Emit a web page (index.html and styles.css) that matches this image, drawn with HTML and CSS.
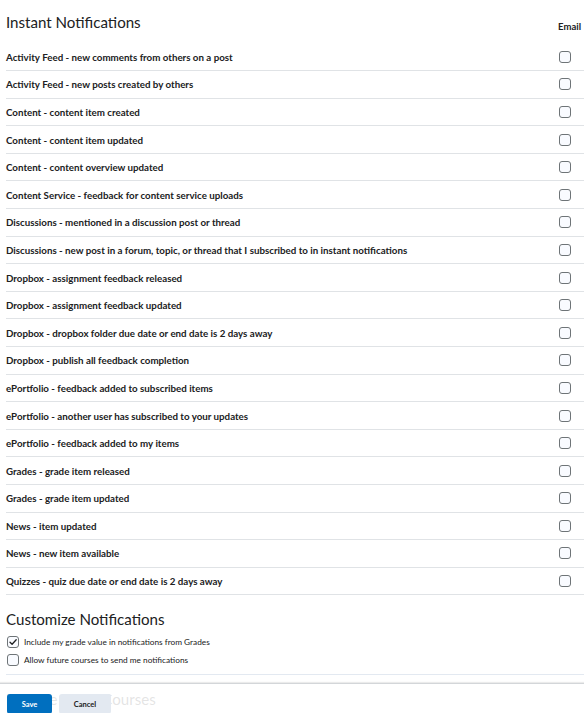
FILE: index.html
```html
<!DOCTYPE html>
<html>
<head>
<meta charset="utf-8">
<link rel="stylesheet" href="styles.css">
</head>
<body>
<main class="page">
  <section class="instant">
    <div class="head">
      <h2 class="title">Instant Notifications</h2>
      <span class="col-email">Email</span>
    </div>
    <div class="rows">
      <div class="row"><span>Activity Feed - new comments from others on a post</span><i class="cb"></i></div>
      <div class="row"><span>Activity Feed - new posts created by others</span><i class="cb"></i></div>
      <div class="row"><span>Content - content item created</span><i class="cb"></i></div>
      <div class="row"><span>Content - content item updated</span><i class="cb"></i></div>
      <div class="row"><span>Content - content overview updated</span><i class="cb"></i></div>
      <div class="row"><span>Content Service - feedback for content service uploads</span><i class="cb"></i></div>
      <div class="row"><span>Discussions - mentioned in a discussion post or thread</span><i class="cb"></i></div>
      <div class="row"><span>Discussions - new post in a forum, topic, or thread that I subscribed to in instant notifications</span><i class="cb"></i></div>
      <div class="row"><span>Dropbox - assignment feedback released</span><i class="cb"></i></div>
      <div class="row"><span>Dropbox - assignment feedback updated</span><i class="cb"></i></div>
      <div class="row"><span>Dropbox - dropbox folder due date or end date is 2 days away</span><i class="cb"></i></div>
      <div class="row"><span>Dropbox - publish all feedback completion</span><i class="cb"></i></div>
      <div class="row"><span>ePortfolio - feedback added to subscribed items</span><i class="cb"></i></div>
      <div class="row"><span>ePortfolio - another user has subscribed to your updates</span><i class="cb"></i></div>
      <div class="row"><span>ePortfolio - feedback added to my items</span><i class="cb"></i></div>
      <div class="row"><span>Grades - grade item released</span><i class="cb"></i></div>
      <div class="row"><span>Grades - grade item updated</span><i class="cb"></i></div>
      <div class="row"><span>News - item updated</span><i class="cb"></i></div>
      <div class="row"><span>News - new item available</span><i class="cb"></i></div>
      <div class="row"><span>Quizzes - quiz due date or end date is 2 days away</span><i class="cb"></i></div>
    </div>
  </section>
  <section class="customize">
    <h2 class="title">Customize Notifications</h2>
    <label class="opt"><i class="cb checked"><svg viewBox="0 0 12 12" width="12" height="12"><path d="M3 6.2 L5.1 8.3 L9.2 3.8" fill="none" stroke="#202122" stroke-width="1.3" stroke-linecap="round" stroke-linejoin="round"/></svg></i><span>Include my grade value in notifications from Grades</span></label>
    <label class="opt"><i class="cb"></i><span>Allow future courses to send me notifications</span></label>
  </section>
  <section class="exclude">
    <h2 class="title">Exclude Some Courses</h2>
  </section>
</main>
<footer class="footer">
  <button class="btn primary">Save</button>
  <button class="btn">Cancel</button>
</footer>
</body>
</html>
```
FILE: styles.css
```css
html, body {
  margin: 0;
  padding: 0;
  background: #fff;
}
body {
  font-family: Lato, "Open Sans", sans-serif;
  color: #202122;
  overflow: hidden;
}
.page {
  padding-left: 6px;
}
.title {
  margin: 0;
  font-weight: 400;
  font-size: 15.1px;
  line-height: 20px;
  color: #202122;
}
.head {
  display: flex;
  justify-content: space-between;
  align-items: flex-start;
  height: 43.5px;
}
.head .title {
  margin-top: 12px;
}
.col-email {
  margin-top: 21px;
  margin-right: 3px;
  font-size: 9.5px;
  font-weight: 700;
  line-height: 12px;
}
.row {
  display: flex;
  align-items: center;
  justify-content: space-between;
  height: 27.6px;
  box-sizing: border-box;
  border-bottom: 1px solid #e0e3e6;
  padding-right: 13px;
  font-size: 9.75px;
  font-weight: 700;
}
.cb {
  display: inline-block;
  width: 12px;
  height: 12px;
  box-sizing: border-box;
  border: 1px solid #6e7477;
  border-radius: 3px;
  background: #f9fbff;
  flex: none;
}
.cb.checked svg {
  display: block;
  margin: -1px;
}
.customize {
  padding-top: 13.5px;
  border-bottom: 1px solid #e3e9f1;
  padding-bottom: 4.5px;
}
.customize .title {
  margin-bottom: 4.5px;
}
.opt {
  display: flex;
  align-items: center;
  gap: 5px;
  height: 18px;
  padding-left: 1px;
  font-size: 8.27px;
}
.exclude {
  padding-top: 14px;
}
.footer {
  position: fixed;
  left: 0;
  right: 0;
  bottom: 0;
  height: 30px;
  box-sizing: border-box;
  padding: 10px 0 0 7px;
  display: flex;
  gap: 7px;
  align-items: flex-start;
  background: rgba(255, 255, 255, 0.88);
  border-top: 1px solid #d3d6d9;
  box-shadow: 0 -1px 1px rgba(0, 0, 0, 0.08);
}
.btn {
  height: 20px;
  width: 52px;
  border: none;
  border-radius: 3px;
  background: #e3e9f1;
  color: #202122;
  font-family: Lato, "Open Sans", sans-serif;
  font-size: 7.5px;
  font-weight: 700;
  padding: 0;
}
.btn.primary {
  width: 45px;
  background: #006fbf;
  color: #fff;
}
```
